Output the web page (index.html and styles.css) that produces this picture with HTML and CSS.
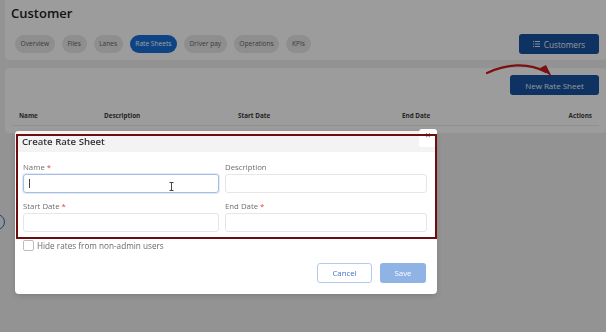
FILE: index.html
```html
<!DOCTYPE html>
<html lang="en">
<head>
    <meta charset="UTF-8">
    <meta name="viewport" content="width=device-width, initial-scale=1.0">
    <title>Customer - Rate Sheets</title>
    <link rel="stylesheet" href="styles.css">
</head>
<body>
    <div class="page">
        <section class="card head-card">
            <h1>Customer</h1>
            <div class="tabs-row">
                <nav class="tabs">
                    <a href="#" class="tab">Overview</a>
                    <a href="#" class="tab">Files</a>
                    <a href="#" class="tab">Lanes</a>
                    <a href="#" class="tab active">Rate Sheets</a>
                    <a href="#" class="tab">Driver pay</a>
                    <a href="#" class="tab">Operations</a>
                    <a href="#" class="tab">KPIs</a>
                </nav>
                <button class="btn-primary btn-customers">
                    <svg width="7" height="6" viewBox="0 0 7 6"><path d="M0 0.5h1.2M2 0.5h5M0 3h1.2M2 3h5M0 5.5h1.2M2 5.5h5" stroke="#dfe8f5" stroke-width="1"/></svg>
                    Customers
                </button>
            </div>
        </section>

        <section class="card list-card">
            <div class="list-toolbar">
                <button class="btn-primary btn-new">New Rate Sheet</button>
            </div>
            <table class="sheets-table">
                <thead>
                    <tr>
                        <th class="col-name">Name</th>
                        <th class="col-desc">Description</th>
                        <th class="col-start">Start Date</th>
                        <th class="col-end">End Date</th>
                        <th class="col-actions">Actions</th>
                    </tr>
                </thead>
            </table>
        </section>
    </div>

    <span class="help-dot"></span>

    <!-- annotation arrow pointing at the button -->
    <svg class="annot-arrow" width="76" height="22" viewBox="0 0 76 22">
        <path d="M3 13 C 22 4, 44 2, 62 12" fill="none" stroke="#7a1010" stroke-width="2.2" stroke-linecap="round"/>
        <path d="M56 8 L68 17 L62 5 Z" fill="#7a1010"/>
    </svg>

    <div class="overlay">
        <div class="modal">
            <div class="modal-header">Create Rate Sheet</div>
            <button class="modal-close">&times;</button>

            <div class="modal-body">
                <div class="form-grid">
                    <div class="field">
                        <label>Name <span class="req">*</span></label>
                        <div class="input focused">
                            <span class="caret"></span>
                            <svg class="ibeam" width="5" height="9" viewBox="0 0 5 9"><path d="M0.5 0.5h4M2.5 0.5v8M0.5 8.5h4" stroke="#333" stroke-width="0.9" fill="none"/></svg>
                        </div>
                    </div>
                    <div class="field">
                        <label>Description</label>
                        <div class="input"></div>
                    </div>
                    <div class="field">
                        <label>Start Date <span class="req">*</span></label>
                        <div class="input"></div>
                    </div>
                    <div class="field">
                        <label>End Date <span class="req">*</span></label>
                        <div class="input"></div>
                    </div>
                </div>

                <label class="check-row">
                    <span class="checkbox"></span>
                    Hide rates from non-admin users
                </label>

                <div class="modal-actions">
                    <button class="btn-cancel">Cancel</button>
                    <button class="btn-save">Save</button>
                </div>
            </div>

            <div class="annot-box"></div>
        </div>
    </div>
</body>
</html>
```

FILE: styles.css
```css
/* Customer / rate sheets page with modal */
:root {
    --page-bg: #f1f1f1;
    --card-bg: #ffffff;
    --blue: #1a6fd8;
    --blue-dark: #17529f;
    --text-dark: #2a2a2a;
    --text-muted: #6b6b6b;
    --annot: #6e0d0d;
}

* {
    margin: 0;
    padding: 0;
    box-sizing: border-box;
    font-family: 'Open Sans', 'Noto Sans', sans-serif;
}

body {
    background-color: var(--page-bg);
    color: var(--text-dark);
    width: 606px;
    height: 332px;
    overflow: hidden;
}

.page {
    padding-left: 5px;
}

.card {
    background-color: var(--card-bg);
    border-radius: 4px;
}

.head-card {
    height: 62px;
    padding: 4px 7px 0 6px;
    margin-top: -2px;
    margin-bottom: 8px;
}

.head-card h1 {
    font-size: 13px;
    font-weight: 600;
    line-height: 22px;
    color: #222;
}

.tabs-row {
    display: flex;
    justify-content: space-between;
    align-items: flex-start;
    margin-top: 11px;
}

.tabs {
    display: flex;
    gap: 7px;
    padding-left: 4px;
}

.tab {
    display: block;
    height: 18px;
    line-height: 18px;
    padding: 0 5.6px;
    border-radius: 9px;
    background-color: #e8e8e8;
    color: #666;
    font-size: 6.6px;
    text-decoration: none;
}

.tab.active {
    background-color: var(--blue);
    color: #ffffff;
}

.btn-primary {
    border: none;
    border-radius: 3px;
    background-color: var(--blue-dark);
    color: #eef3fb;
    font-size: 8px;
    cursor: pointer;
}

.btn-customers {
    display: flex;
    align-items: center;
    justify-content: center;
    gap: 4px;
    width: 80px;
    height: 20px;
    font-size: 8.2px;
    margin-top: -1px;
}

.list-card {
    height: 65px;
    padding: 7px 7px 0 7px;
}

.list-toolbar {
    display: flex;
    justify-content: flex-end;
}

.btn-new {
    width: 89px;
    height: 20px;
}

.sheets-table {
    width: 587px;
    border-collapse: collapse;
    margin-top: 10px;
    table-layout: fixed;
}

.sheets-table th {
    height: 20px;
    padding: 1px 7px 0;
    text-align: left;
    font-size: 6.3px;
    font-weight: 700;
    color: #3c3c3c;
    border-bottom: 1px solid #ececec;
}

.col-name { width: 85px; }
.col-desc { width: 134px; }
.col-start { width: 164px; }
.col-end { width: 144px; }
.sheets-table th.col-actions { text-align: right; }

.help-dot {
    position: absolute;
    left: -11px;
    top: 214px;
    width: 16px;
    height: 16px;
    border: 1px solid #2a6fd0;
    border-radius: 50%;
}

.overlay {
    position: fixed;
    inset: 0;
    background-color: rgba(0, 0, 0, 0.39);
    padding: 131px 0 0 15px;
}

.annot-arrow {
    position: absolute;
    left: 484px;
    top: 60px;
    z-index: 5;
}

.modal {
    position: relative;
    width: 422px;
    background-color: #ffffff;
    border-radius: 4px;
    box-shadow: 0 2px 6px rgba(0, 0, 0, 0.15);
}

.modal-header {
    height: 21px;
    padding: 3px 0 0 7px;
    background-color: #f3f3f3;
    border-radius: 4px 4px 0 0;
    font-size: 9.6px;
    font-weight: 600;
    line-height: 16px;
    color: #333;
}

.modal-close {
    position: absolute;
    top: -2px;
    right: 0;
    width: 18px;
    height: 18px;
    border: none;
    border-radius: 3px;
    background-color: #ffffff;
    color: #777;
    font-size: 10px;
    line-height: 10px;
    padding-bottom: 6px;
    cursor: pointer;
}

.modal-body {
    padding: 10px 10px 11px 8px;
}

.form-grid {
    display: grid;
    grid-template-columns: 196px 1fr;
    column-gap: 6px;
    row-gap: 8px;
}

.field label {
    display: block;
    font-size: 7.8px;
    line-height: 10px;
    color: #6e6e6e;
    margin-bottom: 2px;
}

.req {
    color: #e2403a;
}

.input {
    position: relative;
    height: 19px;
    border: 1px solid #e6e6e6;
    border-radius: 3px;
}

.input.focused {
    border-color: #a6bde6;
    box-shadow: 0 0 0 1px rgba(140, 170, 225, 0.25);
}

.caret {
    position: absolute;
    left: 5px;
    top: 4px;
    width: 1px;
    height: 9px;
    background-color: #444;
}

.ibeam {
    position: absolute;
    left: 145px;
    top: 7px;
}

.check-row {
    display: flex;
    align-items: center;
    gap: 3px;
    margin-top: 8px;
    font-size: 8.2px;
    color: #6a6a6a;
}

.checkbox {
    width: 11px;
    height: 11px;
    border: 1px solid #bdbdbd;
    border-radius: 2px;
}

.modal-actions {
    display: flex;
    justify-content: flex-end;
    gap: 8px;
    margin-top: 12px;
    padding-right: 1px;
}

.btn-cancel,
.btn-save {
    height: 20px;
    border-radius: 3px;
    font-size: 7.8px;
    cursor: pointer;
}

.btn-cancel {
    width: 55px;
    background-color: #ffffff;
    border: 1px solid #b4cbee;
    color: #3f75c7;
}

.btn-save {
    width: 46px;
    background-color: #90b3e6;
    border: none;
    color: #ffffff;
}

.annot-box {
    position: absolute;
    left: 1px;
    top: 3px;
    width: 421px;
    height: 105px;
    border: 2px solid var(--annot);
    pointer-events: none;
}
```
